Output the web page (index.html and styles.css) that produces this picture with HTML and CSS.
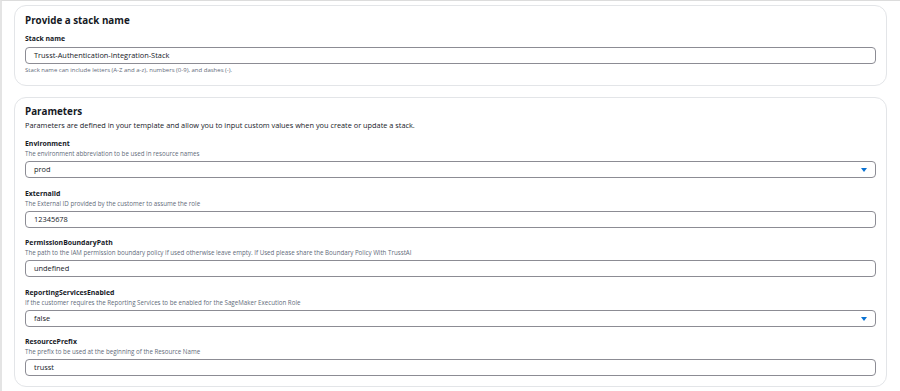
FILE: index.html
```html
<!DOCTYPE html>
<html lang="en">
<head>
    <meta charset="UTF-8" />
    <meta name="viewport" content="width=device-width, initial-scale=1.0">
    <title>Create stack</title>
    <link rel="stylesheet" href="styles.css">
</head>
<body>
    <div class="container">
        <div class="card">
            <h2>Provide a stack name</h2>
            <label class="label" for="stackName">Stack name</label>
            <div class="input">Trusst-Authentication-Integration-Stack</div>
            <div class="hint">Stack name can include letters (A-Z and a-z), numbers (0-9), and dashes (-).</div>
        </div>

        <div class="card">
            <h2>Parameters</h2>
            <p class="intro">Parameters are defined in your template and allow you to input custom values when you create or update a stack.</p>

            <div class="field">
                <div class="label">Environment</div>
                <div class="desc">The environment abbreviation to be used in resource names</div>
                <div class="input select">prod <span class="arrow"></span></div>
            </div>

            <div class="field">
                <div class="label">ExternalId</div>
                <div class="desc">The External ID provided by the customer to assume the role</div>
                <div class="input">12345678</div>
            </div>

            <div class="field">
                <div class="label">PermissionBoundaryPath</div>
                <div class="desc">The path to the IAM permission boundary policy if used otherwise leave empty. If Used please share the Boundary Policy With TrusstAI</div>
                <div class="input">undefined</div>
            </div>

            <div class="field">
                <div class="label">ReportingServicesEnabled</div>
                <div class="desc">If the customer requires the Reporting Services to be enabled for the SageMaker Execution Role</div>
                <div class="input select">false <span class="arrow"></span></div>
            </div>

            <div class="field">
                <div class="label">ResourcePrefix</div>
                <div class="desc">The prefix to be used at the beginning of the Resource Name</div>
                <div class="input">trusst</div>
            </div>
        </div>
    </div>
</body>
</html>
```

FILE: styles.css
```css
body {
    margin: 0;
    height: 390px;
    font-family: "Open Sans", Arial, sans-serif;
    color: #16191f;
    background-color: white;
    border-top: 1px solid #dcdcdc;
    border-left: 2px solid #e4e4e4;
    overflow: hidden;
}

.container {
    padding: 4px 13px 0 12px;
}

.card {
    border: 1px solid #e3e5e8;
    border-radius: 12px;
    padding: 7px 10px 10px 10px;
    margin-bottom: 11px;
}

.card + .card {
    padding-top: 6px;
}

h2 {
    margin: 0;
    font-size: 9.8px;
    line-height: 16px;
    font-weight: bold;
}

.card > .label {
    margin-top: 4px;
}

.label {
    display: block;
    font-size: 6.9px;
    line-height: 11px;
    font-weight: bold;
}

.card > .label + .input {
    margin-top: 3px;
}

.hint {
    margin-top: 2px;
    font-size: 6px;
    line-height: 9px;
    color: #5f6b7a;
}

.intro {
    margin: 0;
    font-size: 7.35px;
    line-height: 10px;
}

.field {
    margin-top: 9.5px;
}

.intro + .field {
    margin-top: 8px;
}

.desc {
    font-size: 6.2px;
    line-height: 9px;
    color: #5f6b7a;
    margin-bottom: 3px;
}

.input {
    position: relative;
    height: 17px;
    box-sizing: border-box;
    border: 1px solid #8c8c94;
    border-radius: 4px;
    padding: 0 8px;
    font-size: 7.4px;
    line-height: 15px;
}

.arrow {
    position: absolute;
    right: 8px;
    top: 6px;
    width: 0;
    height: 0;
    border-left: 3px solid transparent;
    border-right: 3px solid transparent;
    border-top: 4px solid #0972d3;
}
```
